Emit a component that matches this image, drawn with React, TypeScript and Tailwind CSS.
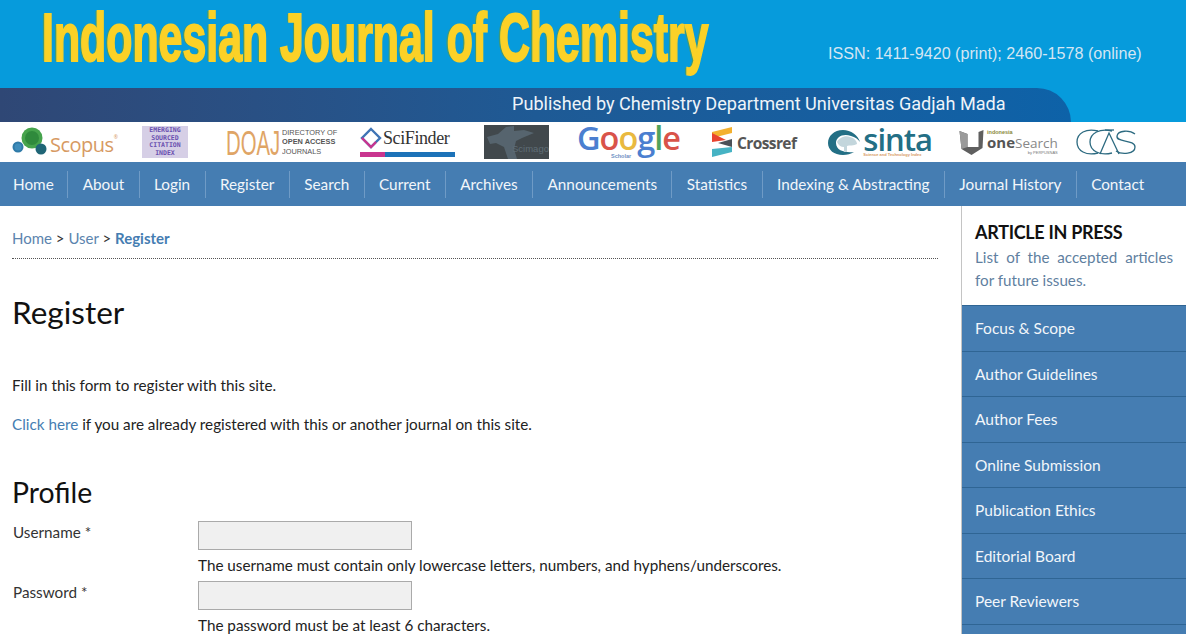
import { ReactNode } from 'react';

const navItems = ['Home', 'About', 'Login', 'Register', 'Search', 'Current', 'Archives', 'Announcements', 'Statistics', 'Indexing & Abstracting', 'Journal History', 'Contact'];
const sideItems = ['Focus & Scope', 'Author Guidelines', 'Author Fees', 'Online Submission', 'Publication Ethics', 'Editorial Board', 'Peer Reviewers'];

function Banner() {
  return (
    <header className="h-[122px] bg-[#069bdc] flex flex-col overflow-hidden">
      <div className="h-[88px] flex relative">
        <div className="w-[790px] pl-[42px] overflow-visible">
          <h1 className="origin-left scale-x-[0.63] -mt-[3px] whitespace-nowrap font-['Liberation_Sans'] font-bold text-[68px] leading-[80px] text-[#fbd127] [-webkit-text-stroke:2px_#fbd127] [text-shadow:-3px_0_0_#3f9a78]">
            Indonesian Journal of Chemistry
          </h1>
        </div>
        <p className="ml-[38px] mt-[43px] font-['Liberation_Sans'] text-[16.15px] leading-[20px] text-[#d4e6f3] whitespace-nowrap">
          ISSN: 1411-9420 (print); 2460-1578 (online)
        </p>
      </div>
      <div className="h-[34px] w-[1071px] rounded-tr-[64px] bg-gradient-to-r from-[#2f4775] via-[#1e5a95] to-[#0d62a8] flex items-center">
        <p className="ml-[512px] -mt-[2px] font-['Roboto'] text-[18.1px] text-[#eef4f9] whitespace-nowrap">
          Published by Chemistry Department Universitas Gadjah Mada
        </p>
      </div>
    </header>
  );
}

function ScopusLogo() {
  return (
    <div className="w-[104px] ml-[12px] flex items-center">
      <svg width="38" height="30" viewBox="0 0 38 30" className="shrink-0">
        <circle cx="20" cy="11" r="10.5" fill="#46a34c" />
        <circle cx="20" cy="11" r="7" fill="#2f8a3c" />
        <circle cx="6" cy="20" r="5.5" fill="#2f7aa8" />
        <circle cx="6" cy="20" r="3.5" fill="#3f8dbb" />
        <circle cx="29" cy="22" r="5.5" fill="#1f6576" />
      </svg>
      <span className="mt-[5px] font-['Open_Sans'] text-[20px] leading-none text-[#d79a63] tracking-[-0.5px]">
        Scopus<span className="align-top text-[5px] leading-none">®</span>
      </span>
    </div>
  );
}

function EsciLogo() {
  return (
    <div className="w-[46px] h-[32px] ml-[26px] bg-[#d6cfe6] flex flex-col items-center justify-center font-['DejaVu_Sans_Mono'] text-[6.5px] leading-[7.5px] font-bold text-[#6a4fb0]">
      <span>EMERGING</span>
      <span>SOURCED</span>
      <span>CITATION</span>
      <span>INDEX</span>
    </div>
  );
}

function DoajLogo() {
  return (
    <div className="ml-[38px] flex items-center gap-[2px]">
      <span className="shrink-0 w-[54px] font-['Liberation_Sans'] text-[35px] leading-none text-[#dfa566] scale-x-[0.58] origin-left">DOAJ</span>
      <div className="w-[50px] font-['Liberation_Sans'] text-[8px] leading-[9.5px] text-[#555] scale-x-[0.92] origin-left whitespace-nowrap">
        <div>DIRECTORY OF</div>
        <div className="font-bold">OPEN ACCESS</div>
        <div>JOURNALS</div>
      </div>
    </div>
  );
}

function SciFinderLogo() {
  return (
    <div className="ml-[28px] w-[95px] h-[30px] flex flex-col justify-between">
      <div className="flex items-center gap-[1px]">
        <svg width="22" height="22" viewBox="0 0 22 22" className="shrink-0">
          <path d="M11 2 L20 11 L11 20 L2 11 Z" fill="none" stroke="#3f74b5" strokeWidth="2.4" />
          <path d="M2 11 L11 20 L16 15" fill="none" stroke="#c9358f" strokeWidth="2.4" />
        </svg>
        <span className="font-['Liberation_Serif'] text-[18px] leading-none text-[#333] tracking-[-0.4px]">SciFinder</span>
      </div>
      <div className="h-[5px] flex">
        <div className="w-[25px] bg-[#c9358f]" />
        <div className="flex-1 bg-[#1c72b8]" />
      </div>
    </div>
  );
}

function ScimagoLogo() {
  return (
    <div className="ml-[29px] w-[65px] h-[34px] bg-[#41484c] relative overflow-hidden">
      <svg width="65" height="34" viewBox="0 0 65 34" className="absolute inset-0">
        <path d="M3 12 L14 9 L22 2 L30 1 L30 6 L40 5 L50 8 L38 13 L32 16 L30 24 L33 34 L24 34 L20 22 L12 18 L6 19 Z" fill="#56646e" />
      </svg>
      <span className="absolute left-[28px] top-[19px] font-['Liberation_Sans'] text-[9.5px] leading-none text-[#5f6d76]">Scimago</span>
    </div>
  );
}

function GoogleLogo() {
  return (
    <div className="ml-[28px] w-[104px] flex flex-col h-[36px]">
      <div className="font-['Open_Sans'] font-semibold text-[32.5px] leading-[28px] tracking-[-1px] whitespace-nowrap">
        <span className="text-[#4b7fd0]">G</span>
        <span className="text-[#d9534a]">o</span>
        <span className="text-[#e9b93f]">o</span>
        <span className="text-[#4b7fd0]">g</span>
        <span className="text-[#4fa35c]">l</span>
        <span className="text-[#d9534a]">e</span>
      </div>
      <span className="ml-[34px] mt-[1px] font-['Liberation_Sans'] font-bold text-[5.5px] leading-[6px] text-[#6d8fc2]">Scholar</span>
    </div>
  );
}

function CrossrefLogo() {
  return (
    <div className="ml-[31px] flex items-center gap-[3px]">
      <svg width="22" height="30" viewBox="0 0 22 30">
        <path d="M0 5 L20 0 L20 6 L0 11 Z" fill="#f3b02f" />
        <path d="M0 6 L14 13 L0 15 Z" fill="#e8432f" />
        <path d="M20 12 L20 20 L6 16 Z" fill="#4b5157" />
        <path d="M0 22 L20 20 L20 25 L0 30 Z" fill="#46b3c4" />
      </svg>
      <span className="mt-[3px] font-['Open_Sans'] font-bold text-[15.5px] leading-none text-[#555] tracking-[-0.6px]">Crossref</span>
    </div>
  );
}

function SintaLogo() {
  return (
    <div className="ml-[31px] flex items-center">
      <svg width="37" height="30" viewBox="0 0 37 30">
        <path d="M16 3 C7 3 1 9 1 16 C1 23 7 28 16 28 C20 28 24 27 27 25 C19 26 9 24 9 16 C9 10 16 6 24 9 C28 10 31 12 33 15 C31 8 24 3 16 3 Z" fill="#236f85" />
        <path d="M10 15 C12 11 18 8 23 10 C27 11 30 14 30 17 C27 19 22 18 20 19 L20 25 L17 25 L17 20 C14 20 11 18 10 15 Z" fill="#c3d6dc" />
      </svg>
      <div className="flex flex-col -ml-[1px]">
        <span className="font-['Open_Sans'] font-semibold text-[31px] leading-[25px] text-[#236f85] tracking-[-1px]">sinta</span>
        <span className="text-[4px] leading-[5px] font-['Liberation_Sans'] font-bold text-[#d79a63] whitespace-nowrap">Science and Technology Index</span>
      </div>
    </div>
  );
}

function OneSearchLogo() {
  return (
    <div className="ml-[26px] flex items-center gap-[2px]">
      <svg width="27" height="28" viewBox="0 0 26 28">
        <path d="M1 3 L9 6 L9 19 L20 19 L20 4 L25 2 L24 20 L13 27 L3 21 Z" fill="#5f5f5f" />
        <path d="M1 3 L9 6 L9 19 L3 21 Z" fill="#9a9a9a" />
      </svg>
      <div className="flex flex-col">
        <span className="text-[5.5px] leading-[6px] font-['Liberation_Sans'] font-bold text-[#8a8a3a]">indonesia</span>
        <div className="flex items-baseline leading-[14px]">
          <span className="font-['Open_Sans'] font-bold text-[15px] text-[#555]">one</span>
          <span className="font-['Open_Sans'] text-[13.5px] text-[#888]">Search</span>
        </div>
        <span className="text-[4px] leading-[5px] text-right font-['Liberation_Sans'] text-[#777]">by PERPUSNAS</span>
      </div>
    </div>
  );
}

function CasLogo() {
  return (
    <svg width="60" height="28" viewBox="0 0 60 28" className="ml-[18px]" fill="none" stroke="#2c6a80" strokeWidth="1.3">
      <path d="M22 3 C10 0 1 5 1 14 C1 23 10 28 22 25" />
      <path d="M36 3 C24 0 14 5 14 14 C14 23 24 28 36 25" />
      <path d="M24 26 L33 5 L43 26" />
      <path d="M29 2 L38 2" />
      <path d="M59 6 C54 2 42 2 41 8 C40 15 59 11 59 19 C59 26 46 27 40 23" />
    </svg>
  );
}

function LogoRow() {
  return (
    <div className="h-[40px] bg-white flex items-center">
      <ScopusLogo />
      <EsciLogo />
      <DoajLogo />
      <SciFinderLogo />
      <ScimagoLogo />
      <GoogleLogo />
      <CrossrefLogo />
      <SintaLogo />
      <OneSearchLogo />
      <CasLogo />
    </div>
  );
}

function NavBar() {
  return (
    <nav className="h-[44px] bg-[#457db2] flex items-center">
      {navItems.map((item, i) => (
        <a
          key={item}
          className={`h-[27px] leading-[27px] text-[15.3px] text-[#f2f6fa] whitespace-nowrap ${i === 0 ? 'pl-[13px] pr-[13.5px]' : 'px-[14.4px]'} ${i < navItems.length - 1 ? 'border-r border-[#6f9bc6]' : ''}`}
        >
          {item}
        </a>
      ))}
    </nav>
  );
}

function Field({ label, hint }: { label: string; hint: ReactNode }) {
  return (
    <div className="grid grid-cols-[185px_1fr] h-[60px] pl-px">
      <label className="leading-[22px] text-[#333]">{label} *</label>
      <div>
        <input type="text" className="block w-[214px] h-[29px] bg-[#f0f0f0] border border-[#aaa]" />
        <p className="mt-[4px] leading-[22px] text-[#222]">{hint}</p>
      </div>
    </div>
  );
}

function Main() {
  return (
    <main className="w-[961px] shrink-0 pl-[12px] pr-[23px] text-[15.25px]">
      <div className="h-[53px] border-b border-dotted border-[#555] pt-[21px] leading-[22px] text-[15px] text-[#333]">
        <a className="text-[#5b84ae]">Home</a> &gt; <a className="text-[#5b84ae]">User</a> &gt;{' '}
        <a className="text-[#457db2] font-bold">Register</a>
      </div>
      <h2 className="mt-[31px] text-[31.5px] leading-[44px] text-[#111]">Register</h2>
      <p className="mt-[40px] leading-[22px] text-[#222]">Fill in this form to register with this site.</p>
      <p className="mt-[17px] leading-[22px] text-[#222]">
        <a className="text-[#457db2]">Click here</a> if you are already registered with this or another journal on this site.
      </p>
      <h3 className="mt-[37px] text-[28.4px] leading-[40px] text-[#111]">Profile</h3>
      <div className="mt-[9px]">
        <Field label="Username" hint="The username must contain only lowercase letters, numbers, and hyphens/underscores." />
        <Field label="Password" hint="The password must be at least 6 characters." />
      </div>
    </main>
  );
}

function Sidebar() {
  return (
    <aside className="flex-1 border-l border-[#c4c4c4]">
      <div className="h-[99px] bg-white pt-[15px] pl-[13px] pr-[13px]">
        <h4 className="text-[18px] leading-[22px] font-bold text-[#111] tracking-[-0.3px]">ARTICLE IN PRESS</h4>
        <p className="mt-[3px] text-[15.2px] leading-[23px] text-[#5f7f9f] text-justify">List of the accepted articles for future issues.</p>
      </div>
      {sideItems.map((item) => (
        <a key={item} className="block h-[45.5px] leading-[44px] pl-[13px] border-t border-[#2f6594] bg-[#457db2] text-[15.5px] text-[#f2f6fa]">
          {item}
        </a>
      ))}
      <div className="h-[20px] border-t border-[#2f6594] bg-[#457db2]" />
    </aside>
  );
}

export default function App() {
  return (
    <div className="h-[634px] overflow-hidden bg-white font-['Lato',sans-serif]">
      <Banner />
      <LogoRow />
      <NavBar />
      <div className="flex">
        <Main />
        <Sidebar />
      </div>
    </div>
  );
}
